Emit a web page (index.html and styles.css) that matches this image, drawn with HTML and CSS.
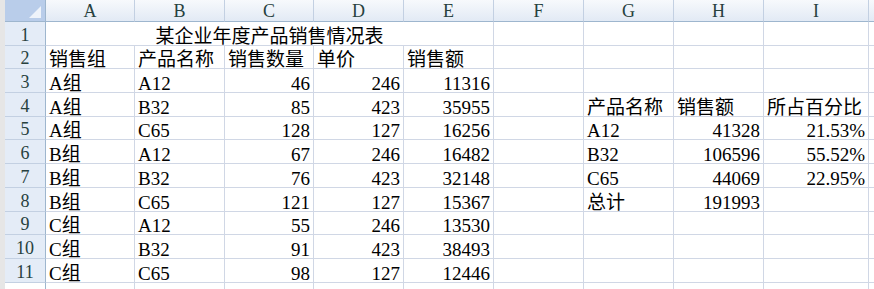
FILE: index.html
```html
<!DOCTYPE html>
<html lang="zh-CN">
<head>
<meta charset="utf-8">
<title>某企业年度产品销售情况表</title>
<link rel="stylesheet" href="styles.css">
</head>
<body>
<div class="app">
  <div class="strip"></div>
  <div class="sheet">
    <div class="corner"><span class="tri"></span></div>
    <div class="colh">A</div><div class="colh">B</div><div class="colh">C</div><div class="colh">D</div><div class="colh">E</div><div class="colh">F</div><div class="colh">G</div><div class="colh">H</div><div class="colh">I</div><div class="colh tail"></div>

    <div class="rowh">1</div>
    <div class="c title">某企业年度产品销售情况表</div><div class="c"></div><div class="c"></div><div class="c"></div><div class="c"></div><div class="c tail"></div>

    <div class="rowh">2</div>
    <div class="c">销售组</div><div class="c">产品名称</div><div class="c">销售数量</div><div class="c">单价</div><div class="c">销售额</div><div class="c"></div><div class="c"></div><div class="c"></div><div class="c"></div><div class="c tail"></div>

    <div class="rowh">3</div>
    <div class="c">A组</div><div class="c">A12</div><div class="c n">46</div><div class="c n">246</div><div class="c n">11316</div><div class="c"></div><div class="c"></div><div class="c"></div><div class="c"></div><div class="c tail"></div>

    <div class="rowh">4</div>
    <div class="c">A组</div><div class="c">B32</div><div class="c n">85</div><div class="c n">423</div><div class="c n">35955</div><div class="c"></div><div class="c">产品名称</div><div class="c">销售额</div><div class="c">所占百分比</div><div class="c tail"></div>

    <div class="rowh">5</div>
    <div class="c">A组</div><div class="c">C65</div><div class="c n">128</div><div class="c n">127</div><div class="c n">16256</div><div class="c"></div><div class="c">A12</div><div class="c n">41328</div><div class="c n">21.53%</div><div class="c tail"></div>

    <div class="rowh">6</div>
    <div class="c">B组</div><div class="c">A12</div><div class="c n">67</div><div class="c n">246</div><div class="c n">16482</div><div class="c"></div><div class="c">B32</div><div class="c n">106596</div><div class="c n">55.52%</div><div class="c tail"></div>

    <div class="rowh">7</div>
    <div class="c">B组</div><div class="c">B32</div><div class="c n">76</div><div class="c n">423</div><div class="c n">32148</div><div class="c"></div><div class="c">C65</div><div class="c n">44069</div><div class="c n">22.95%</div><div class="c tail"></div>

    <div class="rowh">8</div>
    <div class="c">B组</div><div class="c">C65</div><div class="c n">121</div><div class="c n">127</div><div class="c n">15367</div><div class="c"></div><div class="c">总计</div><div class="c n">191993</div><div class="c"></div><div class="c tail"></div>

    <div class="rowh">9</div>
    <div class="c">C组</div><div class="c">A12</div><div class="c n">55</div><div class="c n">246</div><div class="c n">13530</div><div class="c"></div><div class="c"></div><div class="c"></div><div class="c"></div><div class="c tail"></div>

    <div class="rowh">10</div>
    <div class="c">C组</div><div class="c">B32</div><div class="c n">91</div><div class="c n">423</div><div class="c n">38493</div><div class="c"></div><div class="c"></div><div class="c"></div><div class="c"></div><div class="c tail"></div>

    <div class="rowh">11</div>
    <div class="c">C组</div><div class="c">C65</div><div class="c n">98</div><div class="c n">127</div><div class="c n">12446</div><div class="c"></div><div class="c"></div><div class="c"></div><div class="c"></div><div class="c tail"></div>

    <div class="rowh last"></div>
    <div class="c last"></div><div class="c last"></div><div class="c last"></div><div class="c last"></div><div class="c last"></div><div class="c last"></div><div class="c last"></div><div class="c last"></div><div class="c last"></div><div class="c last tail"></div>
  </div>
</div>
</body>
</html>
```

FILE: styles.css
```css
* { box-sizing: border-box; }
html, body { margin: 0; padding: 0; background: #ffffff; }
body { width: 874px; height: 289px; overflow: hidden; }

.app {
  display: flex;
  width: 874px;
  height: 289px;
}

.strip {
  width: 5px;
  flex: 0 0 5px;
  background: #e6e6e6;
}

.sheet {
  flex: 1;
  display: grid;
  grid-template-columns: 41px 89px 90px 89px 90px 90px 90px 90px 90px 105px 1fr;
  grid-template-rows: 22px repeat(11, 23.7px) 1fr;
  font-family: "Liberation Serif", "Noto Sans CJK SC", serif;
  font-size: 19px;
  color: #000;
}

.corner {
  position: relative;
  background: #b9cdea;
  border-right: 1px solid #9eb6ce;
  border-bottom: 1px solid #9eb6ce;
}
.corner .tri {
  position: absolute;
  right: 4px;
  bottom: 3px;
  width: 0;
  height: 0;
  border-left: 12px solid transparent;
  border-bottom: 12px solid #eef3fa;
}

.colh {
  background: linear-gradient(#f7f9fc, #e2eaf5);
  border-right: 1px solid #c3d0e2;
  border-bottom: 1px solid #9eb6ce;
  display: flex;
  align-items: center;
  justify-content: center;
  font-family: "Liberation Serif", serif;
  font-size: 18px;
  color: #27413e;
  padding-top: 1px;
}
.colh.tail { border-right: none; }

.rowh {
  background: #e4ecf7;
  border-right: 1px solid #9eb6ce;
  border-bottom: 1px solid #c3d0e2;
  display: flex;
  align-items: flex-end;
  justify-content: center;
  font-family: "Liberation Serif", serif;
  font-size: 18px;
  line-height: 16px;
  padding-bottom: 2px;
  color: #27413e;
}
.rowh.last { background: #ffffff; border-bottom: none; }

.c {
  border-right: 1px solid #d0d7e5;
  border-bottom: 1px solid #d0d7e5;
  display: flex;
  align-items: flex-end;
  padding: 0 3px 0 3px;
  line-height: 16px;
  white-space: nowrap;
  overflow: visible;
}
.c.n { justify-content: flex-end; }
.c.title {
  grid-column: span 5;
  justify-content: center;
}
.c.tail { border-right: none; }
.c.last { border-bottom: none; }
```
